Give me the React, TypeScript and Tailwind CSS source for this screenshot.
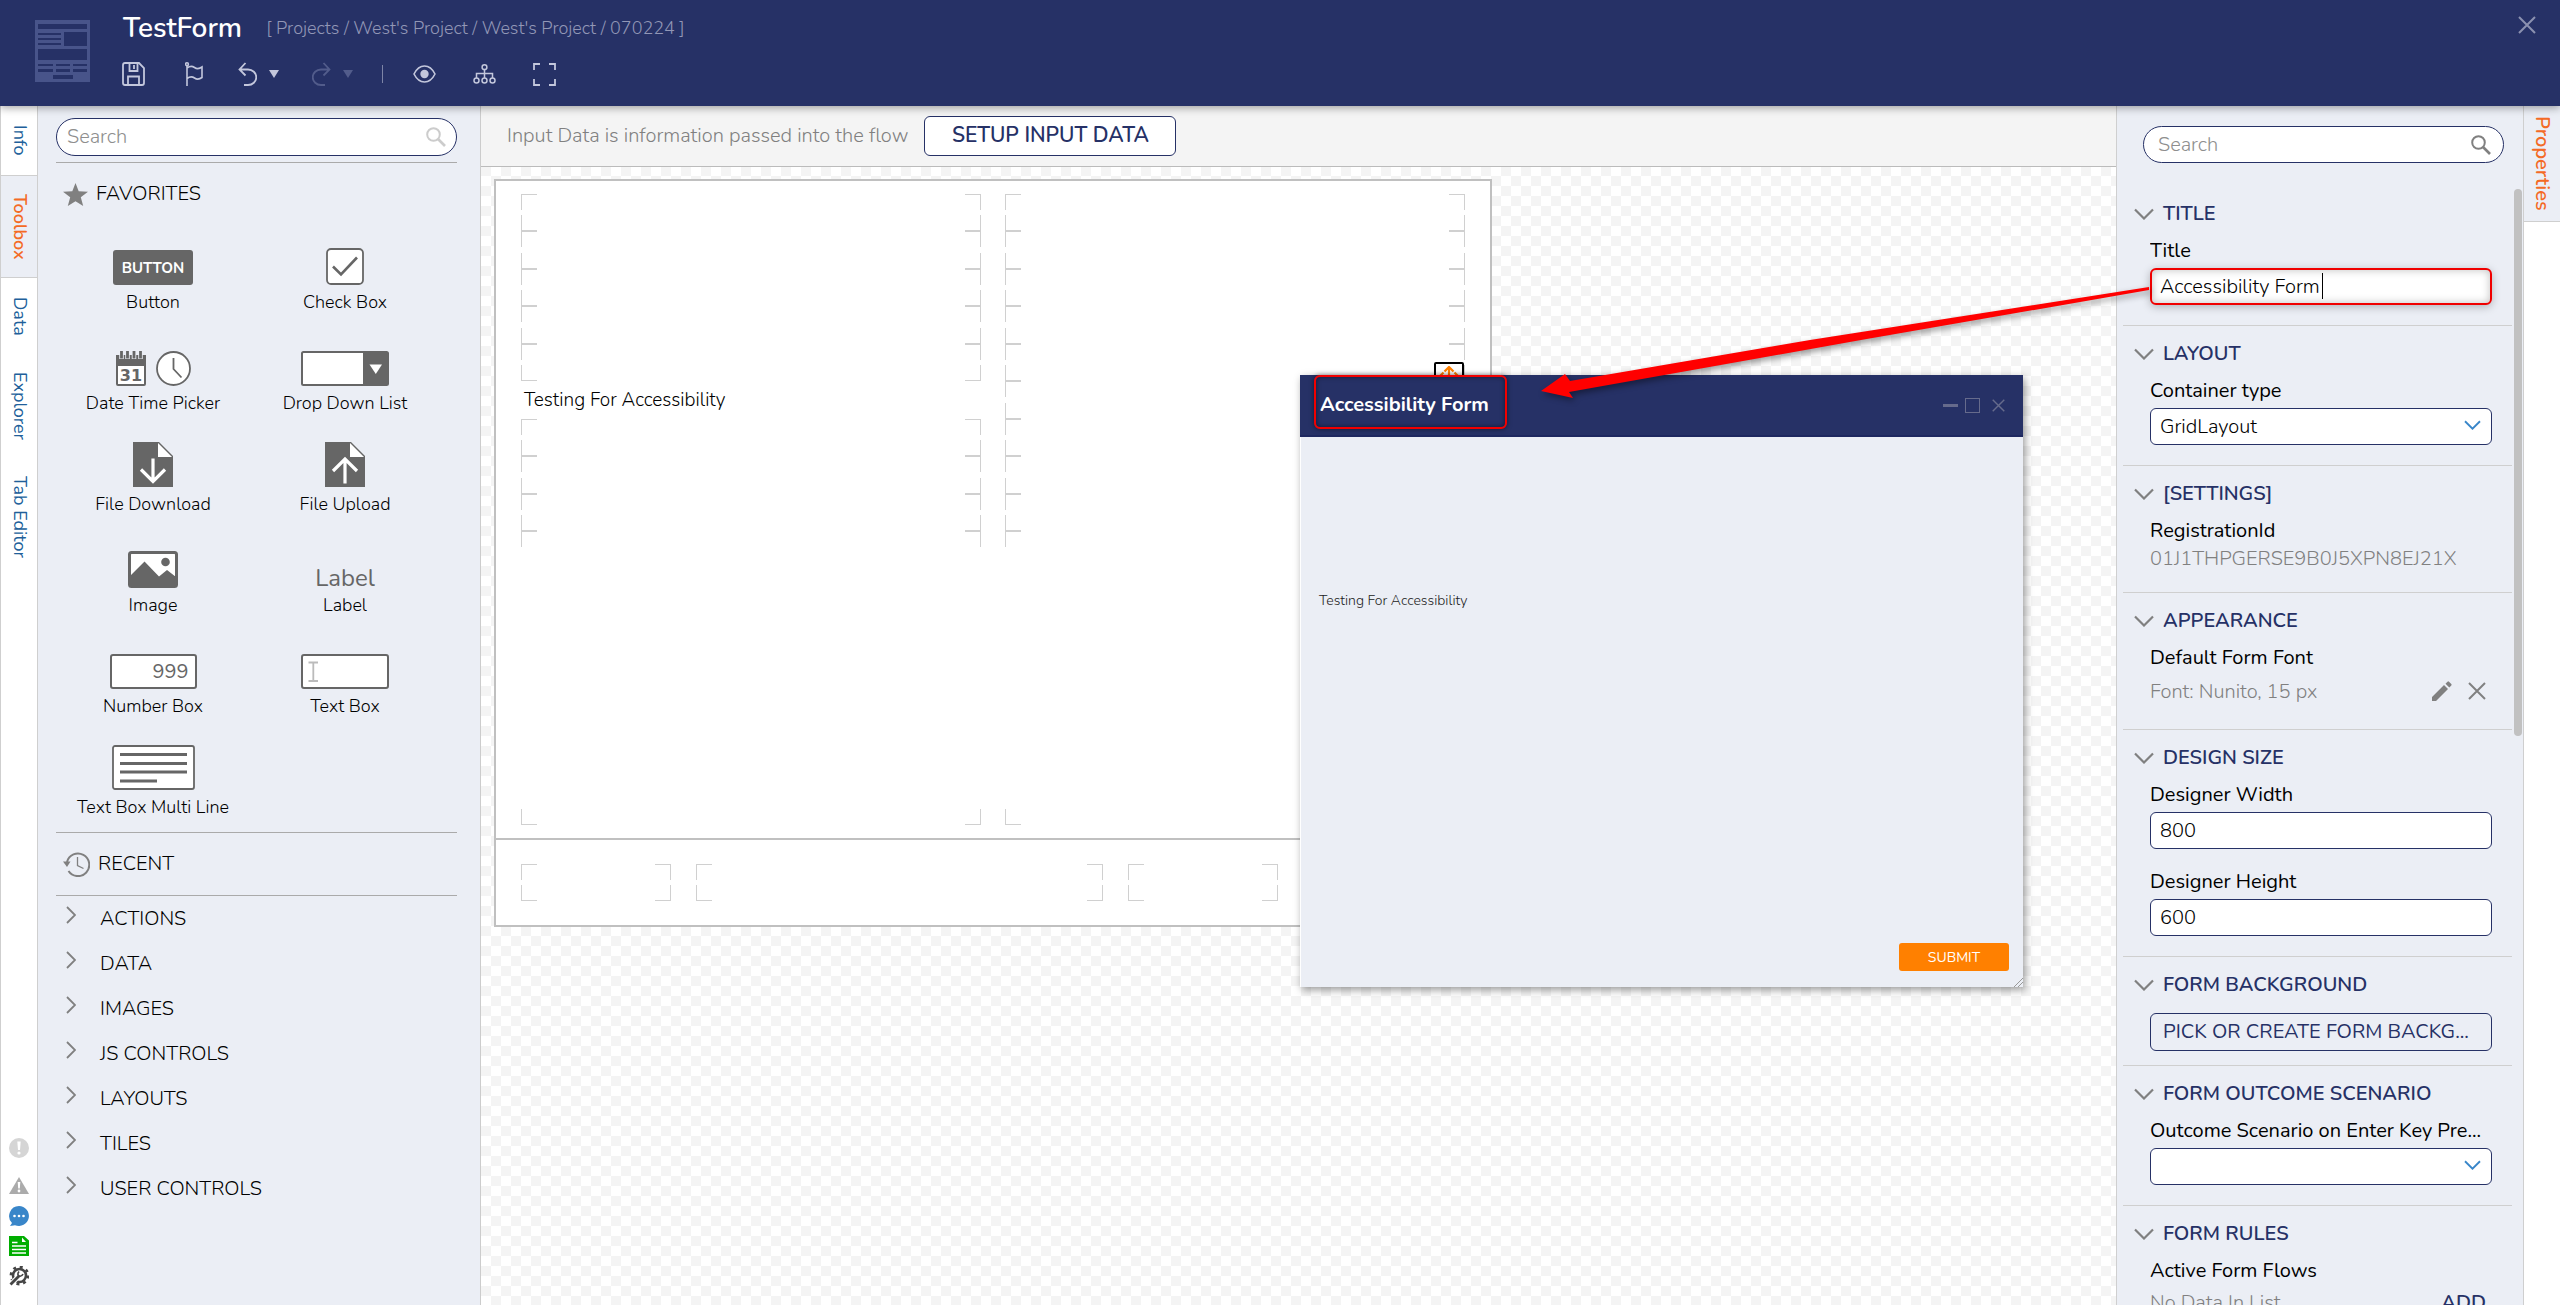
import { useState } from 'react'
import type { ReactNode } from 'react'

const GRAY = '#666666'

/* ---------- small shared icons ---------- */

function ChevronDown({ className }: { className?: string }) {
  return (
    <svg viewBox="0 0 20 12" fill="none" stroke="currentColor" className={className} aria-hidden="true">
      <path d="M1 1.5 L10 10.5 L19 1.5" strokeWidth="2.2" />
    </svg>
  )
}

function SearchIcon({ className }: { className?: string }) {
  return (
    <svg viewBox="0 0 20 20" fill="none" stroke="currentColor" className={className} aria-hidden="true">
      <circle cx="7.5" cy="7.5" r="6.3" strokeWidth="2" />
      <path d="M12 12 L19 19" strokeWidth="2.6" />
    </svg>
  )
}

function CloseIcon({ className }: { className?: string }) {
  return (
    <svg viewBox="0 0 18 18" fill="none" stroke="currentColor" className={className} aria-hidden="true">
      <path d="M1 1 L17 17 M17 1 L1 17" strokeWidth="2" />
    </svg>
  )
}

/* ---------- header ---------- */

function FormLogo() {
  return (
    <svg width="55" height="62" viewBox="0 0 55 62" aria-hidden="true">
      <rect width="55" height="62" fill="#48548a" />
      <g fill="#263166">
        <rect x="3" y="4" width="49" height="5" />
        <rect x="3" y="13" width="23" height="2" />
        <rect x="3" y="18" width="23" height="2" />
        <rect x="3" y="23" width="23" height="2" />
        <rect x="29" y="12" width="23" height="14" />
        <rect x="3" y="29" width="49" height="11" />
        <rect x="3" y="44" width="15" height="2" />
        <rect x="21" y="44" width="14" height="2" />
        <rect x="38" y="44" width="14" height="2" />
        <rect x="3" y="49" width="15" height="3" />
        <rect x="21" y="49" width="14" height="3" />
        <rect x="38" y="49" width="14" height="3" />
        <rect x="18" y="55" width="20" height="4" />
      </g>
    </svg>
  )
}

function Header() {
  return (
    <header className="relative z-30 flex h-[106px] shrink-0 bg-[#263166] pl-[35px] shadow-[0_2px_8px_rgba(0,0,0,0.35)]">
      <div className="pt-5">
        <FormLogo />
      </div>
      <div className="ml-8 flex flex-col">
        <div className="flex h-14 items-center gap-6 pl-px">
          <h1 className="text-[28px] font-semibold text-white">TestForm</h1>
          <p className="text-[18px] font-light text-[#9297b6]">[ Projects / West's Project / West's Project / 070224 ]</p>
        </div>
        <div className="flex h-9 items-center text-[#c3c7dc]">
          <button type="button" aria-label="Save">
            <svg width="23" height="24" viewBox="0 0 23 24" fill="none" stroke="currentColor" strokeWidth="1.8">
              <path d="M1 3 Q1 1 3 1 H17 L22 6 V21 Q22 23 20 23 H3 Q1 23 1 21 Z" />
              <path d="M7.5 1 V9 H15.5 V1 M12 3 V7 M6 23 V14.5 H17 V23" />
            </svg>
          </button>
          <button type="button" aria-label="Flag" className="ml-10">
            <svg width="18" height="24" viewBox="0 0 18 24" fill="none" stroke="currentColor" strokeWidth="1.6">
              <path d="M2 4 V24 M2 6 Q6 3 9.5 5.5 Q13 8 17 5 V15.500 Q13 18.500 9.500 16 Q6 13.500 2 16.500" />
              <circle cx="2" cy="2.200" r="1.400" />
            </svg>
          </button>
          <button type="button" aria-label="Undo" className="ml-[35px] flex items-center gap-3">
            <svg width="19" height="24" viewBox="0 0 19 24" fill="none" stroke="currentColor" strokeWidth="1.8">
              <path d="M7.500 1 L1.500 7.500 L7.500 13.500 M1.500 7.500 H10 A8 7.500 0 0 1 10 23 H6" />
            </svg>
            <svg width="10" height="8" viewBox="0 0 10 8" fill="currentColor">
              <path d="M0 0 H10 L5 8 Z" />
            </svg>
          </button>
          <button type="button" aria-label="Redo" className="ml-[33px] flex items-center gap-3 text-[#525c8b]">
            <svg width="19" height="24" viewBox="0 0 19 24" fill="none" stroke="currentColor" strokeWidth="1.8">
              <path d="M11.500 1 L17.500 7.500 L11.500 13.500 M17.500 7.500 H9 A8 7.500 0 0 0 9 23 H13" />
            </svg>
            <svg width="10" height="8" viewBox="0 0 10 8" fill="currentColor">
              <path d="M0 0 H10 L5 8 Z" />
            </svg>
          </button>
          <span className="ml-[29px] h-[18px] w-px bg-[#7d84a6]" />
          <button type="button" aria-label="Preview" className="ml-[30px]">
            <svg width="23" height="18" viewBox="0 0 23 18" fill="none" stroke="currentColor" strokeWidth="1.6">
              <path d="M1 9 Q5 1 11.500 1 Q18 1 22 9 Q18 17 11.500 17 Q5 17 1 9 Z" />
              <circle cx="11.500" cy="9" r="4.200" fill="currentColor" stroke="none" />
            </svg>
          </button>
          <button type="button" aria-label="Hierarchy" className="ml-[37px]">
            <svg width="23" height="20" viewBox="0 0 23 20" fill="none" stroke="currentColor" strokeWidth="1.500">
              <circle cx="11.500" cy="3.200" r="2.400" />
              <path d="M11.500 5.500 V14 M3.500 14 V9.500 H19.500 V14" />
              <circle cx="3.500" cy="16.500" r="2.500" />
              <circle cx="11.500" cy="16.500" r="2.500" />
              <circle cx="19.500" cy="16.500" r="2.500" />
            </svg>
          </button>
          <button type="button" aria-label="Full screen" className="ml-[37px]">
            <svg width="23" height="23" viewBox="0 0 23 23" fill="none" stroke="currentColor" strokeWidth="1.8">
              <path d="M1 7 V1 H7 M16 1 H22 V7 M22 16 V22 H16 M7 22 H1 V16" />
            </svg>
          </button>
        </div>
      </div>
      <button type="button" aria-label="Close" className="mt-4 mr-6 ml-auto self-start text-[#8b91b0]">
        <CloseIcon className="size-[18px]" />
      </button>
    </header>
  )
}

/* ---------- left rail ---------- */

function LeftRail() {
  const tab = 'flex w-full items-center justify-center text-[18px] [writing-mode:vertical-rl]'
  return (
    <nav className="flex w-[38px] shrink-0 flex-col border-x border-[#cfcfcf] bg-white text-[#215f9a]">
      <button type="button" className={`${tab} h-[70px] border-b border-[#cfcfcf]`}>Info</button>
      <button type="button" className={`${tab} h-[102px] border-b border-[#cfcfcf] bg-[#ebeef5] font-semibold text-[#f46a25]`}>
        Toolbox
      </button>
      <button type="button" className={`${tab} h-[76px]`}>Data</button>
      <button type="button" className={`${tab} h-[104px]`}>Explorer</button>
      <button type="button" className={`${tab} h-[118px]`}>Tab Editor</button>

      <div className="mt-auto mb-[19px] flex flex-col items-center gap-[10px]">
        <svg width="20" height="20" viewBox="0 0 20 20" className="mb-2">
          <circle cx="10" cy="10" r="10" fill="#d5d5d5" />
          <path d="M8.300 3.500 H11.700 L11 12 H9 Z" fill="#fff" />
          <circle cx="10" cy="15" r="1.600" fill="#fff" />
        </svg>
        <svg width="20" height="20" viewBox="0 0 20 20">
          <path d="M10 1 L20 18 H0 Z" fill="#ababab" />
          <path d="M8.700 6 H11.300 L10.800 12.500 H9.200 Z" fill="#fff" />
          <circle cx="10" cy="15" r="1.400" fill="#fff" />
        </svg>
        <svg width="20" height="20" viewBox="0 0 20 20">
          <path d="M10 0 A10 10 0 1 1 6 19.200 L1 20 L3 17 A10 10 0 0 1 10 0 Z" fill="#3986c9" />
          <g fill="#fff">
            <circle cx="5.500" cy="10" r="1.300" />
            <circle cx="10" cy="10" r="1.300" />
            <circle cx="14.500" cy="10" r="1.300" />
          </g>
        </svg>
        <svg width="20" height="20" viewBox="0 0 20 20">
          <path d="M0 0 H15 L20 4.500 V20 H0 Z" fill="#00ad00" />
          <path d="M13 1.500 V6 H17 Z" fill="#fff" />
          <path d="M3 6.500 H8.500 M3 10 H17 M3 13.500 H17 M3 17 H17" stroke="#fff" strokeWidth="1.300" />
        </svg>
        <svg width="20" height="20" viewBox="0 0 20 20" fill="none" stroke="#454545">
          <circle cx="10.500" cy="9.500" r="6.500" strokeWidth="2.600" />
          <circle cx="10.500" cy="9.500" r="8.700" strokeWidth="2.400" strokeDasharray="3 3.830" />
          <path d="M1 19 L8.500 11.500" stroke="#fff" strokeWidth="5" />
          <path d="M1.500 18.500 L10.500 9.500" strokeWidth="2.800" />
          <path d="M10 5.500 Q7.500 9 10.500 10.200 Q13 10.500 14 8" strokeWidth="1.600" />
        </svg>
      </div>
    </nav>
  )
}

/* ---------- toolbox ---------- */

const tools: { name: string; icon: ReactNode }[] = [
  {
    name: 'Button',
    icon: <span className="flex h-[35px] w-20 items-center justify-center rounded-[3px] bg-[#666666] text-[15px] font-bold text-white">BUTTON</span>,
  },
  {
    name: 'Check Box',
    icon: (
      <svg width="38" height="37" viewBox="0 0 38 37" fill="none" stroke={GRAY}>
        <rect x="1" y="1" width="36" height="35" rx="4" fill="#fff" strokeWidth="1.800" />
        <path d="M7 18.500 L15 26.500 L31 9.500" strokeWidth="2.600" />
      </svg>
    ),
  },
  {
    name: 'Date Time Picker',
    icon: (
      <span className="flex items-end gap-[10px]">
        <svg width="30" height="35" viewBox="0 0 30 35">
          <rect x="1" y="5" width="28" height="29" rx="1" fill="#fff" stroke={GRAY} strokeWidth="2" />
          <rect y="4" width="30" height="11" fill={GRAY} />
          <g stroke="#ebeef5" strokeWidth="4.500">
            <path d="M5.500 2 V8 M11.500 2 V8 M18 2 V8 M24.500 2 V8" />
          </g>
          <g stroke={GRAY} strokeWidth="2.800">
            <path d="M5.500 0 V7.500 M11.500 0 V7.500 M18 0 V7.500 M24.500 0 V7.500" />
          </g>
          <text x="15" y="30" textAnchor="middle" fontSize="16" fontWeight="bold" fontFamily="DejaVu Sans" fill={GRAY}>31</text>
        </svg>
        <svg width="35" height="35" viewBox="0 0 35 35" fill="none" stroke={GRAY} strokeWidth="1.800">
          <circle cx="17.500" cy="17.500" r="16.500" fill="#fff" />
          <path d="M17.500 7 V18 L25.500 26.500" />
        </svg>
      </span>
    ),
  },
  {
    name: 'Drop Down List',
    icon: (
      <svg width="88" height="35" viewBox="0 0 88 35">
        <rect x="1" y="1" width="86" height="33" rx="1.500" fill="#fff" stroke={GRAY} strokeWidth="2" />
        <path d="M62 1 H87 V34 H62 Z" fill={GRAY} />
        <path d="M68.500 13.500 H81 L74.800 23 Z" fill="#fff" />
      </svg>
    ),
  },
  {
    name: 'File Download',
    icon: (
      <svg width="40" height="45" viewBox="0 0 40 45">
        <path d="M0 0 H26 L40 14 V45 H0 Z" fill={GRAY} />
        <path d="M25 1 V15 H39 Z" fill="#fff" />
        <path d="M20 16.500 V40 M8 27.500 L20 39.500 L32 27.500" fill="none" stroke="#fff" strokeWidth="3.200" />
      </svg>
    ),
  },
  {
    name: 'File Upload',
    icon: (
      <svg width="40" height="45" viewBox="0 0 40 45">
        <path d="M0 0 H26 L40 14 V45 H0 Z" fill={GRAY} />
        <path d="M25 1 V15 H39 Z" fill="#fff" />
        <path d="M20 41.500 V17 M8 29 L20 17 L32 29" fill="none" stroke="#fff" strokeWidth="3.200" />
      </svg>
    ),
  },
  {
    name: 'Image',
    icon: (
      <svg width="50" height="37" viewBox="0 0 50 37">
        <rect x="1.500" y="1.500" width="47" height="34" rx="2" fill="#fff" stroke={GRAY} strokeWidth="3" />
        <path d="M2 25 L16.500 10.500 L31 25.500 L39 19 L48 26 V36 H2 Z" fill={GRAY} />
        <circle cx="37.500" cy="11" r="4.300" fill={GRAY} />
      </svg>
    ),
  },
  { name: 'Label', icon: <span className="text-[24px] leading-5 font-normal text-[#666666]">Label</span> },
  {
    name: 'Number Box',
    icon: (
      <span className="flex h-[35px] w-[87px] items-center justify-end rounded-[3px] border-2 border-[#666666] bg-white pr-[6px] text-[20px] font-normal text-[#666666]">
        999
      </span>
    ),
  },
  {
    name: 'Text Box',
    icon: (
      <svg width="88" height="35" viewBox="0 0 88 35">
        <rect x="1" y="1" width="86" height="33" rx="2" fill="#fff" stroke={GRAY} strokeWidth="2" />
        <path d="M7.500 8.500 H17 M7.500 27 H17 M12.300 8.500 V27" stroke="#bbb" strokeWidth="1.800" />
      </svg>
    ),
  },
  {
    name: 'Text Box Multi Line',
    icon: (
      <svg width="83" height="45" viewBox="0 0 83 45" stroke={GRAY}>
        <rect x="1" y="1" width="81" height="43" rx="2" fill="#fff" strokeWidth="1.800" />
        <path d="M8 9.500 H75 M8 18.500 H75 M8 27 H75 M8 36 H45" strokeWidth="3" />
      </svg>
    ),
  },
]

const categories = ['ACTIONS', 'DATA', 'IMAGES', 'JS CONTROLS', 'LAYOUTS', 'TILES', 'USER CONTROLS']

function Toolbox() {
  return (
    <aside className="w-[443px] shrink-0 overflow-hidden border-r border-[#cccccc] bg-[#ebeef5] pt-3 pr-[23px] pl-[18px] text-black">
      <label className="flex h-[38px] items-center rounded-full border border-[#263166] bg-white pr-[10px] pl-[10px]">
        <input type="text" aria-label="Search toolbox" placeholder="Search" className="min-w-0 flex-1 bg-transparent text-[20px] font-light outline-none placeholder:text-[#8e8e8e]" />
        <SearchIcon className="size-5 text-[#cccccc]" />
      </label>
      <div className="mt-[6px] border-t border-[#aaaaaa]">
        <h2 className="flex h-[50px] items-center gap-2 pt-3 pl-[7px] text-[20px] font-light">
          <svg width="25" height="23" viewBox="0 0 25 23" fill="#808080">
            <path d="M12.500 0 L15.700 8.300 L25 8.800 L17.800 14.300 L20.200 23 L12.500 18.200 L4.800 23 L7.200 14.300 L0 8.800 L9.300 8.300 Z" />
          </svg>
          FAVORITES
        </h2>
        <div className="ml-px grid w-96 auto-rows-[101px] grid-cols-2">
          {tools.map((tool) => (
            <button key={tool.name} type="button" className="flex flex-col items-center justify-end text-[18px] leading-6 font-light">
              {tool.icon}
              <span className="mt-[5px]">{tool.name}</span>
            </button>
          ))}
        </div>
      </div>
      <h2 className="mt-[13px] flex h-16 items-center gap-2 border-y border-[#aaaaaa] pl-[7px] text-[20px] font-light">
        <svg width="27" height="25" viewBox="0 0 27 25" fill="none" stroke="#808080">
          <path d="M4 10 A11.300 11.300 0 1 1 5.500 19" strokeWidth="2" />
          <path d="M0 9.500 H7.500 L4 15 Z" fill="#808080" stroke="none" />
          <path d="M14.500 5 V13.500 L20.500 16.500" strokeWidth="1.300" />
        </svg>
        RECENT
      </h2>
      <ul>
        {categories.map((category) => (
          <li key={category}>
            <button type="button" className="flex h-[45px] w-full items-center pl-[10px] text-[20px] font-light">
              <svg width="10" height="18" viewBox="0 0 10 18" fill="none" stroke="#808080" className="mb-2">
                <path d="M1 1 L9 9 L1 17" strokeWidth="1.800" />
              </svg>
              <span className="ml-6">{category}</span>
            </button>
          </li>
        ))}
      </ul>
    </aside>
  )
}

/* ---------- designer canvas ---------- */

// Drop target: only its four corners are outlined
function Cell() {
  const corner = 'h-full max-h-4 w-4 border-[#d0d0d0]'
  return (
    <div className="flex flex-col justify-between gap-[5px]">
      <div className="flex min-h-0 flex-1 justify-between">
        <i className={`${corner} border-t border-l`} />
        <i className={`${corner} border-t border-r`} />
      </div>
      <div className="flex min-h-0 flex-1 items-end justify-between">
        <i className={`${corner} border-b border-l`} />
        <i className={`${corner} border-r border-b`} />
      </div>
    </div>
  )
}

function FormSurface() {
  const column = 'grid h-[631px] flex-1 grid-rows-[repeat(9,1fr)_294px]'
  const rows = Array.from({ length: 10 }, (_, i) => i)
  return (
    <div className="w-[998px] border-2 border-[#c0c0c0] bg-white">
      <div className="flex h-[659px] gap-6 border-b-2 border-[#c0c0c0] px-[25px] pt-[13px]">
        <div className={column}>
          {rows.map((i) =>
            i === 5 ? (
              <p key={i} className="flex items-center pl-[3px] text-[19px] font-light">Testing For Accessibility</p>
            ) : (
              <Cell key={i} />
            ),
          )}
        </div>
        <div className={column}>
          {rows.map((i) => (
            <Cell key={i} />
          ))}
        </div>
      </div>
      <div className="grid h-[85px] grid-cols-[150px_407px_150px_1fr] grid-rows-[37px] content-center gap-[25px] px-[25px]">
        <Cell />
        <Cell />
        <Cell />
        <Cell />
      </div>
    </div>
  )
}

function PreviewWindow() {
  return (
    <section className="absolute top-[269px] left-[819px] flex h-[612px] w-[723px] flex-col bg-[#ebeef5] shadow-[2px_3px_8px_rgba(0,0,0,0.4)]">
      <header className="flex h-[62px] shrink-0 items-center border-b-2 border-[#1e2860] bg-[#263166] pr-[18px] pl-[14px]">
        <div className="flex h-[54px] w-[193px] items-center self-start rounded-md border-2 border-[#f20000] pt-[6px] pl-1 text-[20px] font-bold whitespace-nowrap text-white shadow-[0_0_5px_rgba(0,0,0,0.5),inset_0_0_5px_rgba(0,0,0,0.5)]">
          Accessibility Form
        </div>
        <div className="ml-auto flex items-center text-[#666b8c]">
          <button type="button" aria-label="Minimize" className="h-[3px] w-[15px] bg-current" />
          <button type="button" aria-label="Maximize" className="ml-[7px] size-[15px] border border-current" />
          <button type="button" aria-label="Close preview" className="ml-3">
            <CloseIcon className="size-[13px]" />
          </button>
        </div>
      </header>
      <div className="flex flex-1 flex-col border-l border-white px-[18px] pb-4">
        <p className="mt-[154px] text-[14px] leading-5 font-light text-[#222]">Testing For Accessibility</p>
        <button type="button" className="mt-auto -mr-1 h-7 w-[110px] self-end rounded-[3px] bg-[#ff8000] text-[14px] text-white">SUBMIT</button>
      </div>
      <svg width="9" height="9" viewBox="0 0 9 9" stroke="#999" className="absolute right-0 bottom-0">
        <path d="M0 9 L9 0 M4 9 L9 4" strokeWidth="1" />
      </svg>
    </section>
  )
}

function Designer() {
  return (
    <main className="relative z-20 flex min-w-0 flex-1 flex-col">
      <div className="flex h-[61px] shrink-0 items-center gap-4 border-b border-[#bbbbbb] bg-[#f4f4f4] pl-[26px]">
        <p className="text-[20px] font-light text-[#808080]">Input Data is information passed into the flow</p>
        <button type="button" className="h-10 w-[252px] rounded-md border border-[#263166] bg-white text-[21px] font-semibold text-[#263166]">
          SETUP INPUT DATA
        </button>
      </div>
      <div className="flex-1 bg-white bg-[repeating-conic-gradient(#f4f4f4_0_25%,transparent_0_50%)] bg-[length:20px_20px] bg-[position:10px_-1px] pt-3 pl-[13px]">
        <FormSurface />
      </div>

      {/* move handle of the selected cell */}
      <div className="absolute top-[256px] left-[953px] flex size-[30px] justify-center rounded-[2px] border-2 border-black bg-white pt-[2px]">
        <svg width="22" height="22" viewBox="0 0 22 22" fill="none" stroke="#ff8000" strokeWidth="2.200">
          <path d="M11 1 V21 M1 11 H21 M6.500 5.500 L11 1 L15.500 5.500 M5.500 6.500 L1 11 L5.500 15.500 M16.500 6.500 L21 11 L16.500 15.500" />
        </svg>
      </div>

      <PreviewWindow />

      {/* callout arrow from the Title field to the preview caption */}
      <svg width="620" height="125" viewBox="0 0 620 125" className="pointer-events-none absolute top-[174px] left-[1055px] overflow-visible drop-shadow-[2px_3px_3px_rgba(0,0,0,0.4)]">
        <path d="M5 111 L29 94 L34 101 L274 60 L613 7 L613 10 L325 60 L33 112 L37 118 Z" fill="#ff0000" />
      </svg>
    </main>
  )
}

/* ---------- properties ---------- */

const fieldBox = 'h-[37px] w-full rounded-md border border-[#263166] bg-white px-[9px] text-[20px] font-light text-black outline-none'

function Section({ title, children }: { title: string; children: ReactNode }) {
  return (
    <section className="border-b border-[#cfcfcf] pt-[14px]">
      <h2 className="flex h-7 items-center gap-[9px] pl-[11px] text-[20px] font-semibold text-[#263166]">
        <ChevronDown className="h-3 w-5 text-[#808080]" />
        {title}
      </h2>
      <div className="pr-5 pb-5 pl-[27px]">{children}</div>
    </section>
  )
}

function FieldLabel({ htmlFor, children }: { htmlFor?: string; children: ReactNode }) {
  return (
    <label htmlFor={htmlFor} className="mt-[9px] block h-7 truncate text-[20px] leading-7 text-black">
      {children}
    </label>
  )
}

function SelectField({ id, options }: { id: string; options: string[] }) {
  return (
    <div className="relative mt-[3px]">
      <select id={id} className={`${fieldBox} block appearance-none`}>
        {options.map((option) => (
          <option key={option}>{option}</option>
        ))}
      </select>
      <ChevronDown className="pointer-events-none absolute top-3 right-[11px] h-[10px] w-[17px] text-[#3986c9]" />
    </div>
  )
}

function Properties() {
  const [title, setTitle] = useState('Accessibility Form')
  const [width, setWidth] = useState('800')
  const [height, setHeight] = useState('600')

  return (
    <aside className="flex w-[408px] shrink-0 flex-col border-x border-[#cfcfcf] bg-[#ebeef5]">
      <div className="h-20 pt-5 pr-[19px] pl-[26px]">
        <label className="flex h-[37px] items-center rounded-full border border-[#263166] bg-white pr-3 pl-[14px]">
          <input type="text" aria-label="Search properties" placeholder="Search" className="min-w-0 flex-1 bg-transparent text-[20px] font-light outline-none placeholder:text-[#8e8e8e]" />
          <SearchIcon className="size-5 text-[#808080]" />
        </label>
      </div>
      <div className="flex min-h-0 flex-1">
        <div className="min-w-0 flex-1 overflow-hidden pl-[6px]">
          <Section title="TITLE">
            <FieldLabel htmlFor="title">Title</FieldLabel>
            <div className="relative mt-[3px]">
              <input
                id="title"
                type="text"
                value={title}
                onChange={(e) => setTitle(e.target.value)}
                className="block h-[37px] w-full rounded-md border-2 border-[#f00000] bg-white px-2 text-[20px] font-light text-black shadow-[0_2px_8px_rgba(0,0,0,0.25),inset_0_0_8px_rgba(0,0,0,0.25)] outline-none"
              />
              <span className="absolute top-[5px] left-[172px] h-[26px] w-px bg-black" />
            </div>
          </Section>
          <Section title="LAYOUT">
            <FieldLabel htmlFor="container">Container type</FieldLabel>
            <SelectField id="container" options={['GridLayout']} />
          </Section>
          <Section title="[SETTINGS]">
            <FieldLabel>RegistrationId</FieldLabel>
            <p className="-mb-px h-7 text-[20px] leading-7 font-light text-[#808080]">01J1THPGERSE9B0J5XPN8EJ21X</p>
          </Section>
          <Section title="APPEARANCE">
            <FieldLabel>Default Form Font</FieldLabel>
            <div className="flex h-[37px] items-center text-[#808080]">
              <p className="pt-[3px] text-[20px] font-light">Font: Nunito, 15 px</p>
              <button type="button" aria-label="Edit font" className="ml-auto">
                <svg width="20" height="20" viewBox="0 0 20 20" fill="currentColor">
                  <path d="M0 16 L12 4 L16 8 L4 20 H0 Z M13.500 2.700 L15.500 0.700 Q16.300 0 17 0.700 L19.300 3 Q20 3.800 19.300 4.500 L17.300 6.500 Z" />
                </svg>
              </button>
              <button type="button" aria-label="Clear font" className="mr-[6px] ml-4">
                <CloseIcon className="size-[18px]" />
              </button>
            </div>
          </Section>
          <Section title="DESIGN SIZE">
            <FieldLabel htmlFor="width">Designer Width</FieldLabel>
            <input id="width" type="text" value={width} onChange={(e) => setWidth(e.target.value)} className={`${fieldBox} mt-[3px] mb-[19px] block`} />
            <FieldLabel htmlFor="height">Designer Height</FieldLabel>
            <input id="height" type="text" value={height} onChange={(e) => setHeight(e.target.value)} className={`${fieldBox} mt-[3px] block`} />
          </Section>
          <Section title="FORM BACKGROUND">
            <button type="button" className="-mb-[6px] mt-[14px] block h-[38px] w-full truncate rounded-md border border-[#263166] px-3 text-left text-[20px] text-[#263166]">
              PICK OR CREATE FORM BACKG...
            </button>
          </Section>
          <Section title="FORM OUTCOME SCENARIO">
            <FieldLabel htmlFor="outcome">Outcome Scenario on Enter Key Pre...</FieldLabel>
            <SelectField id="outcome" options={['']} />
          </Section>
          <Section title="FORM RULES">
            <FieldLabel>Active Form Flows</FieldLabel>
            <div className="flex h-9 items-center justify-between pr-[6px] text-[20px]">
              <p className="font-light text-[#808080]">No Data In List</p>
              <button type="button" className="font-semibold text-[#263166]">ADD</button>
            </div>
          </Section>
        </div>
        <div className="w-[11px] pt-[3px] pl-[2px]">
          <div className="h-[547px] w-2 rounded-full bg-[#c1c1c1]" />
        </div>
      </div>
    </aside>
  )
}

export default function App() {
  return (
    <div className="flex h-screen flex-col overflow-hidden bg-white font-[Nunito,Lato,'Noto_Sans',sans-serif]">
      <Header />
      <div className="flex min-h-0 flex-1">
        <LeftRail />
        <Toolbox />
        <Designer />
        <Properties />
        <div className="w-9 shrink-0 bg-white">
          <button type="button" className="flex h-[116px] w-full items-center justify-center border-b border-[#cfcfcf] bg-[#ebeef5] text-[20px] font-semibold text-[#f46a25] [writing-mode:vertical-rl]">
            Properties
          </button>
        </div>
      </div>
    </div>
  )
}
